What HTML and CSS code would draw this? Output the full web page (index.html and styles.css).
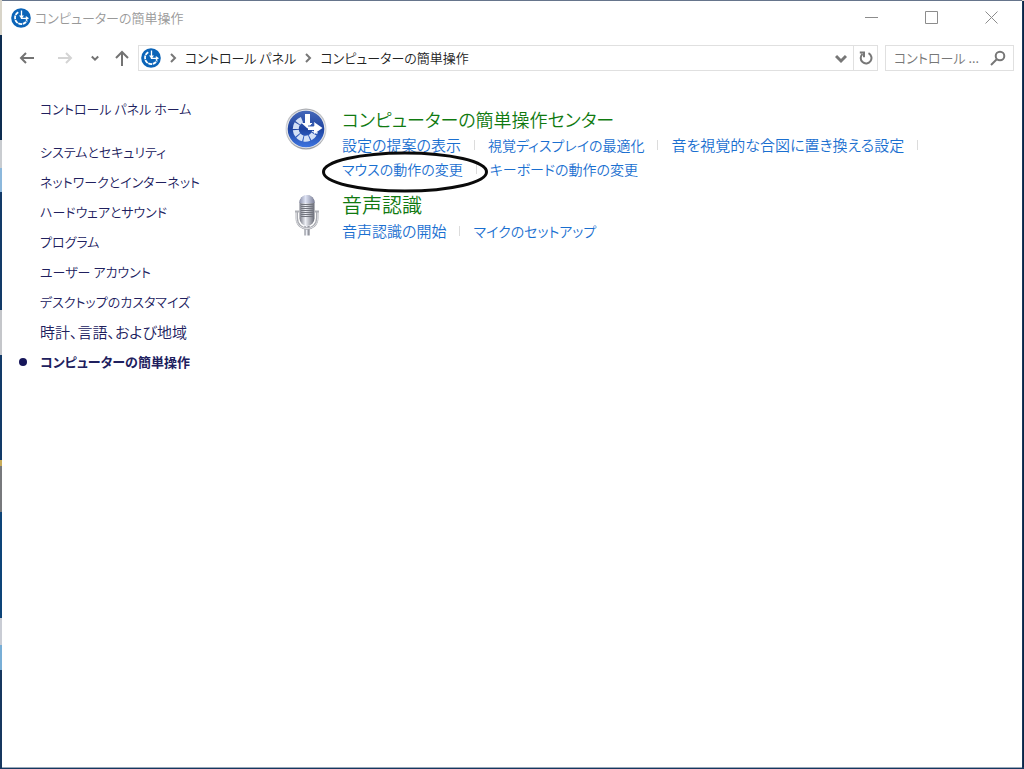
FILE: index.html
```html
<!DOCTYPE html>
<html lang="ja">
<head>
<meta charset="utf-8">
<meta name="viewport" content="width=device-width, initial-scale=1">
<title>コンピューターの簡単操作</title>
<link rel="stylesheet" href="styles.css">
</head>
<body>
<svg class="defs" aria-hidden="true">
  <symbol id="ease" viewBox="0 0 20 20">
    <circle cx="10" cy="10" r="9.800" fill="#0b64b8"/>
    <path d="M7.300 4.200A6.300 6.300 0 1 0 16 12.400" fill="none" stroke="#fff" stroke-width="1.800" stroke-dasharray="3.800 .7"/>
    <path d="M10.500 2.500v7.800h4.500" fill="none" stroke="#fff" stroke-width="1.300"/>
    <path d="M8 7.500l2.500 3.300L13 7.500zM14.800 8l3.200 2.300-3.200 2.300z" fill="#fff"/>
  </symbol>
</svg>
<div class="window">
  <header class="titlebar">
    <svg class="app-icon"><use href="#ease"/></svg>
    <h1 class="title">コンピューターの簡単操作</h1>
    <div class="controls">
      <button class="control" aria-label="最小化"><svg width="14" height="14" viewBox="0 0 14 14"><path d="M0 6.500h13"/></svg></button>
      <button class="control" aria-label="最大化"><svg width="14" height="14" viewBox="0 0 14 14"><path d="M.5 .5h12v12H.5z"/></svg></button>
      <button class="control" aria-label="閉じる"><svg width="14" height="14" viewBox="0 0 14 14"><path d="M.5 .5l12 12M12.500 .5l-12 12"/></svg></button>
    </div>
  </header>
  <div class="toolbar">
    <div class="history">
      <button class="nav-button" aria-label="戻る"><svg width="16" height="16" viewBox="0 0 16 16"><path d="M15 8H2M7 3L2 8l5 5"/></svg></button>
      <button class="nav-button disabled" aria-label="進む" disabled><svg width="16" height="16" viewBox="0 0 16 16"><path d="M1 8h13M9 3l5 5-5 5"/></svg></button>
      <button class="nav-button small" aria-label="最近表示した場所"><svg width="8" height="16" viewBox="0 0 8 16"><path d="M.8 6.500L4 9.700l3.200-3.200"/></svg></button>
      <button class="nav-button" aria-label="上へ"><svg width="16" height="16" viewBox="0 0 16 16"><path d="M8 16V2M2 8l6-6 6 6"/></svg></button>
    </div>
    <nav class="address" aria-label="アドレス">
      <svg class="app-icon"><use href="#ease"/></svg>
      <svg class="chevron" viewBox="0 0 8 10"><path d="M2 1l4 4-4 4"/></svg>
      <a class="crumb" href="#">コントロール パネル</a>
      <svg class="chevron" viewBox="0 0 8 10"><path d="M2 1l4 4-4 4"/></svg>
      <a class="crumb" href="#">コンピューターの簡単操作</a>
      <button class="address-button dropdown" aria-label="以前の場所"><svg width="12" height="12" viewBox="0 0 12 12"><path d="M1 4l5 5 5-5"/></svg></button>
      <button class="address-button refresh" aria-label="最新の情報に更新"><svg width="14" height="14" viewBox="0 0 14 14"><path d="M9.500 2.200A5.400 5.400 0 1 1 3.500 3M.8 1.600h4.200v4.600"/></svg></button>
    </nav>
    <form class="search">
      <input class="search-box" type="text" placeholder="コントロール ..." aria-label="コントロール パネルの検索">
      <button class="search-button" type="button" aria-label="検索"><svg width="16" height="16" viewBox="0 0 16 16"><circle cx="10" cy="6" r="4.300"/><path d="M7 9l-6 6"/></svg></button>
    </form>
  </div>
  <div class="body">
    <nav class="sidebar" aria-label="カテゴリ">
      <a class="side-link home" href="#">コントロール パネル ホーム</a>
      <a class="side-link" href="#">システムとセキュリティ</a>
      <a class="side-link" href="#">ネットワークとインターネット</a>
      <a class="side-link" href="#">ハードウェアとサウンド</a>
      <a class="side-link" href="#">プログラム</a>
      <a class="side-link" href="#">ユーザー アカウント</a>
      <a class="side-link" href="#">デスクトップのカスタマイズ</a>
      <a class="side-link kanji" href="#">時計、言語、および地域</a>
      <a class="side-link current" href="#" aria-current="page">コンピューターの簡単操作</a>
    </nav>
    <main class="content">
      <section class="category">
        <svg class="category-icon" viewBox="0 0 42 42">
          <defs>
            <linearGradient id="blue" x2="0" y2="1"><stop stop-color="#4668b9"/><stop offset=".5" stop-color="#1f44a0"/><stop offset="1" stop-color="#3d74e0"/></linearGradient>
            <linearGradient id="rim" x2="0" y2="1"><stop stop-color="#a9abb0"/><stop offset=".5" stop-color="#d5d7db"/><stop offset="1" stop-color="#9a9ca2"/></linearGradient>
          </defs>
          <circle cx="21" cy="21" r="20.500" fill="url(#rim)"/>
          <circle cx="21" cy="21" r="19.300" fill="#e6e7ea"/>
          <circle cx="21" cy="21" r="18.300" fill="url(#blue)"/>
          <path d="M17 11.800A9.800 9.800 0 1 0 30 23.500" fill="none" stroke="#d3e0f6" stroke-width="6" stroke-dasharray="5.300 1"/>
          <path d="M20 6h5v9h3.500L22.500 20.500 16.500 15H20z" fill="#fff"/>
          <path d="M23 18h6v-4l8.500 6-8.500 6v-4h-6z" fill="#fff"/>
          <path d="M25.200 17.800l3.500-3.500M28.800 14.500v3.500H23" stroke="#3a5fb2"/>
        </svg>
        <div class="category-text">
          <h2 class="category-title kana-title"><a href="#">コンピューターの簡単操作センター</a></h2>
          <ul class="tasks">
            <li class="task"><a href="#">設定の提案の表示</a></li>
            <li class="task kana"><a href="#">視覚ディスプレイの最適化</a></li>
            <li class="task"><a href="#">音を視覚的な合図に置き換える設定</a></li>
          </ul>
          <ul class="tasks">
            <li class="task kana marked"><a href="#">マウスの動作の変更</a><svg class="marker" viewBox="0 0 166 42" aria-hidden="true"><ellipse cx="83" cy="21" rx="81.500" ry="19"/></svg></li>
            <li class="task kana last"><a href="#">キーボードの動作の変更</a></li>
          </ul>
        </div>
      </section>
      <section class="category">
        <svg class="category-icon" viewBox="0 0 42 42">
          <defs>
            <linearGradient id="mic"><stop stop-color="#777a85"/><stop offset=".4" stop-color="#eef0f6"/><stop offset="1" stop-color="#666974"/></linearGradient>
            <linearGradient id="cap"><stop stop-color="#8c91ab"/><stop offset=".4" stop-color="#dfe4f5"/><stop offset="1" stop-color="#7c8098"/></linearGradient>
          </defs>
          <path d="M19.500 32h5v9.500h-5z" fill="url(#mic)"/>
          <path d="M11.800 18v6c0 14 20.400 14 20.400 0v-6" fill="none" stroke="#a9abb1" stroke-width="2.500"/>
          <path d="M11.300 18v6c0 14 21.400 14 21.400 0v-6" fill="none" stroke="#dfe0e4" stroke-width="1"/>
          <rect x="14.500" y="1" width="15" height="31" rx="7.500" fill="url(#mic)"/>
          <path d="M14.500 9V8.500a7.500 7.500 0 0 1 15 0V9z" fill="url(#cap)"/>
          <path d="M16 10.500h12M16 12.500h12M16 14.500h12M16 16.500h12M16 18.500h12M16 20.500h12M16 22.500h12" stroke="#73767f" stroke-width="1"/>
          <path d="M10 17.500h4.500M29.500 17.500H34" stroke="#aeb0b6" stroke-width="2"/>
        </svg>
        <div class="category-text">
          <h2 class="category-title"><a href="#">音声認識</a></h2>
          <ul class="tasks">
            <li class="task"><a href="#">音声認識の開始</a></li>
            <li class="task kana last"><a href="#">マイクのセットアップ</a></li>
          </ul>
        </div>
      </section>
    </main>
  </div>
</div>
</body>
</html>
```
FILE: styles.css
```css
* { box-sizing: border-box; }

body {
  margin: 0;
  min-height: 100vh;
  display: flex;
  padding: 1px 2px 2px;
  background: linear-gradient(#d8d4c8 0 35px, #0d2c50 35px 140px, #c9ccd0 140px 168px, #8cb8dc 168px 192px, #123a68 192px 310px, #c4c6ca 310px 355px, #123a68 355px 460px, #c7ab59 460px 466px, #77797c 466px 512px, #0d4478 512px 618px, #c9ccd4 618px 645px, #78aed6 645px 670px, #17375f 670px);
  font-family: "Noto Sans CJK JP", sans-serif;
  font-size: 13px;
  font-weight: 350;
  font-feature-settings: "palt";
  line-height: 24px;
}

a { color: inherit; text-decoration: none; }
button { padding: 0; border: 0; background: none; font: inherit; }
svg { display: block; flex: none; fill: none; }
.defs { position: absolute; width: 0; height: 0; }

.window {
  flex: 1;
  min-width: 0;
  background: #fff;
  box-shadow: 0 -1px #66758c, 1px 0 #18375a, 2px 0 #0b2545, 0 1px #9aa9ba, 0 2px #17375f;
}

.titlebar { display: flex; align-items: center; gap: 4px; height: 34px; padding-left: 9px; }
.app-icon { width: 20px; height: 20px; }
.title { margin: 0; font-size: 13px; font-weight: 350; color: #999; }
.controls { display: flex; margin-left: auto; }
.control { display: grid; place-items: center; width: 60px; height: 34px; stroke: #8c8c8c; }

.toolbar { display: flex; align-items: center; height: 46px; padding: 0 8px 0 17px; }
.history { display: flex; align-items: center; gap: 15px; width: 119px; }
.history .nav-button { flex: none; stroke: #737373; stroke-width: 2; }
.history .disabled { margin-left: 7px; stroke: #d4d4d4; }
.history .small { margin-left: 3px; }
.address { display: flex; flex: 1; align-items: center; height: 26px; padding-left: 2px; border: 1px solid #e0e0e0; color: #222; }
.chevron { width: 8px; height: 10px; margin: 0 8px; stroke: #777; stroke-width: 2; }
.address-button { display: grid; place-items: center; width: 24px; height: 24px; stroke: #777; stroke-width: 2; }
.dropdown { margin-left: auto; stroke-width: 3; }
.refresh { border-left: 1px solid #e0e0e0; }
.search { display: flex; align-items: center; width: 129px; height: 26px; margin-left: 7px; padding: 0 7px 0 8px; border: 1px solid #e0e0e0; }
.search-box { flex: 1; min-width: 0; padding: 0; border: 0; outline: 0; font: inherit; font-feature-settings: inherit; }
.search-box::placeholder { color: #777; opacity: 1; }
.search-button { stroke: #777; stroke-width: 2; }

.body { display: flex; }
.sidebar { display: flex; flex-direction: column; width: 283px; padding: 13px 0 0 38px; color: #20205e; }
.side-link { line-height: 30px; }
.home { margin-bottom: 13px; }
.kanji { font-size: 15px; }
.current { display: flex; align-items: center; margin-left: -21px; font-weight: 700; }
.current::before { content: ""; width: 8px; height: 8px; margin-right: 13px; border-radius: 50%; background: #16165a; }

.content { flex: 1; min-width: 0; padding-top: 24px; }
.category { display: flex; gap: 15px; margin-bottom: 10px; }
.category-icon { width: 42px; height: 42px; margin-top: 3px; }
.category-title { margin: 0; font-size: 20px; font-weight: 350; line-height: 28px; color: #107a10; }
.kana-title { font-size: 18px; }
.tasks { display: flex; flex-wrap: wrap; margin: 0; padding: 0; list-style: none; font-size: 15px; color: #1a6fd0; }
.task { display: flex; align-items: center; }
.kana { font-size: 14px; }
.task::after { content: ""; width: 1px; height: 10px; margin: 0 13px; background: #dcdcdc; }
.last::after { content: none; }
.marked { position: relative; }
.marker { position: absolute; left: -20px; top: -6px; width: 166px; height: 42px; stroke: #0a0a0a; stroke-width: 3; pointer-events: none; }
```
